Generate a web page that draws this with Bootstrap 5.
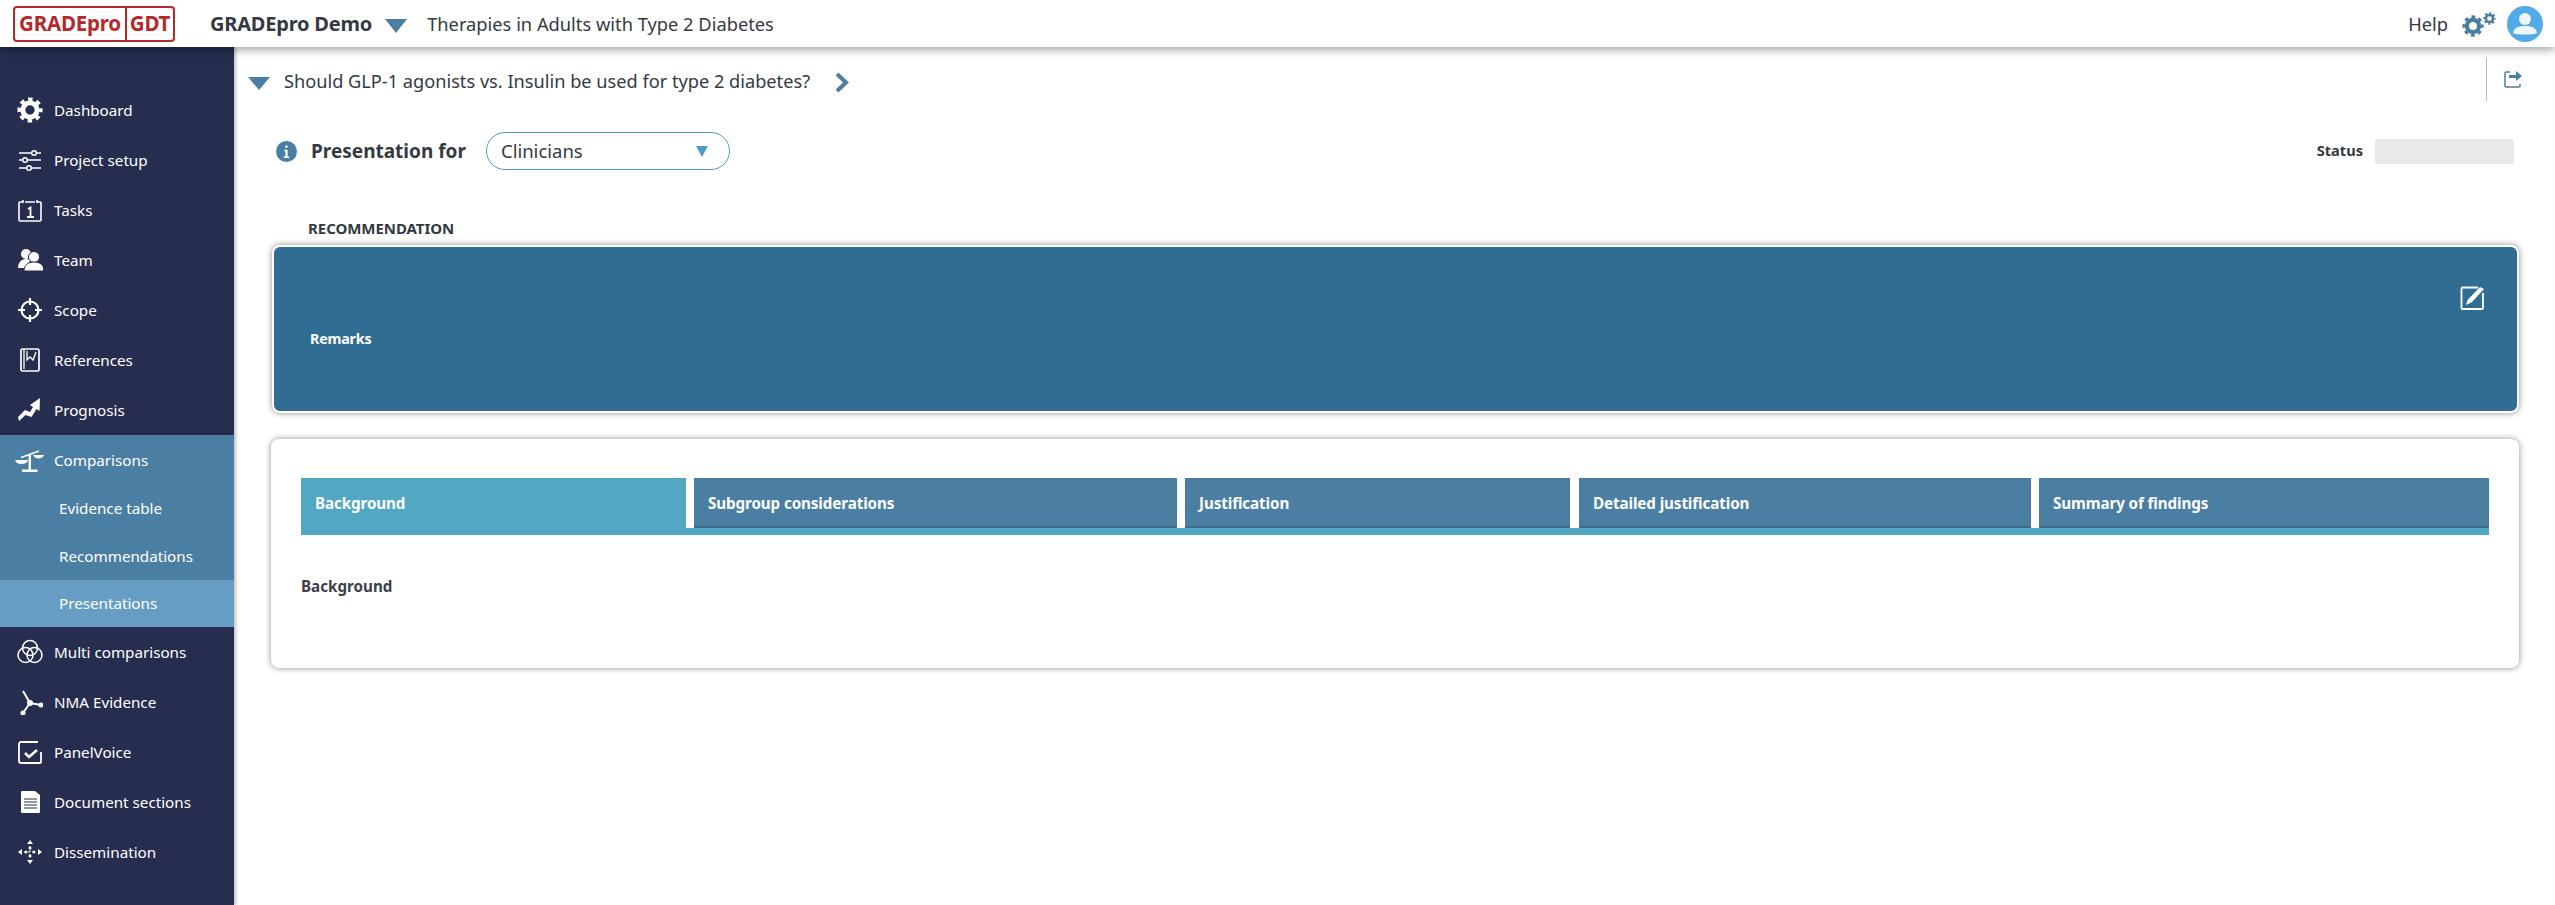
<!DOCTYPE html>
<html lang="en"><head><meta charset="utf-8"><title>GRADEpro</title>
<link href="https://cdn.jsdelivr.net/npm/bootstrap@5.3.0/dist/css/bootstrap.min.css" rel="stylesheet">
<style>
html,body{height:905px;overflow:hidden}
body{font-family:"Noto Sans","Open Sans",sans-serif;color:#333a42;background:#fff}
.gp-top{height:47px;padding:0;background:#fff;position:relative;z-index:3;box-shadow:0 3px 8px rgba(0,0,0,.35);flex-wrap:nowrap;justify-content:flex-start}
.gp-logo{margin-left:13px;width:162px;height:36px;border:2px solid #b5282b;border-radius:4px;color:#b5282b;font-weight:700;font-size:20.5px;line-height:31px;letter-spacing:-.2px}
.gp-logo span{display:block;text-align:center}
.gp-logo .gp-l1{width:112px;border-right:2px solid #b5282b}
.gp-logo .gp-l2{flex:1}
.gp-org{margin-left:35px;font-size:20px;font-weight:700;letter-spacing:-.2px;line-height:47px;color:#333a42}
.gp-tri{display:inline-block;width:0;height:0;border-left:11px solid transparent;border-right:11px solid transparent;border-top:14px solid #4a7fa3}
.gp-tri-org{margin-left:13px;margin-top:4px}
.gp-proj{margin-left:20px;font-size:18.3px;line-height:47px}
.gp-help{font-size:18.3px;margin-right:14px}
.gp-side{width:234px;flex:none;background:#272d4f;padding-top:38px;color:#fff;box-shadow:2px 0 3px rgba(0,0,0,.25);position:relative;z-index:2}
.gp-it{height:50px;display:flex;align-items:center;padding-left:17px;color:#fff;font-size:15.2px;text-decoration:none}
.gp-it svg{width:26px;height:26px;margin-right:11px;flex:none}
.gp-it svg.gp-scale{width:29px;height:23px;margin-left:-2px;margin-right:10px}
.gp-group{background:#4a7fa3}
.gp-sub{height:47px;display:flex;align-items:center;padding-left:59px;color:#fff;font-size:15.2px;text-decoration:none}
.gp-sub-tall{height:48px}
.gp-sub.gp-on{background:#659dc4}
.gp-main{flex:1;min-width:0}
.gp-q{height:54px;padding:21px 0 0 14px;position:relative;line-height:27px}
.gp-q .gp-tri{border-top-width:13px;margin-top:9px}
.gp-qt{margin-left:14px;font-size:18.2px}
.gp-chev{margin-left:24px;margin-top:4px}
.gp-share{width:69px;height:44px;border-left:1px solid #bbb;position:absolute;right:0;top:10px;display:flex;align-items:center;padding-left:17px}
.gp-pres{height:38px;margin-top:31px;padding-left:42px;padding-right:41px}
.gp-pt{margin-left:14px;font-size:19px;font-weight:700}
.gp-sel{margin-left:20px;width:244px;height:38px;border:1px solid #4d9bc9;border-radius:19px;padding:0 21px 0 14px;font-size:18.5px}
.gp-sel i{display:block;width:0;height:0;border-left:6px solid transparent;border-right:6px solid transparent;border-top:11px solid #4d9bc9}
.gp-st{font-size:14.6px;font-weight:700;margin-right:12px}
.gp-stb{width:139px;height:25px;background:#e9e9e9;border-radius:2px}
.gp-rt{margin:47px 0 6px 74px;font-size:15px;font-weight:700;letter-spacing:-.05px;line-height:22px}
.gp-rec{margin:0 36px 0 38px;height:168px;background:#316d93;border:2px solid #fff;border-radius:8px;box-shadow:0 0 6px rgba(0,0,0,.45);color:#fff;position:relative;padding:0 36px;display:flex;align-items:center}
.gp-rec b{font-size:14.3px;letter-spacing:-.2px;margin-top:20px}
.gp-edit{position:absolute;right:31px;top:37px;width:26px;height:26px}
.gp-card{margin:26px 36px 0 37px;height:229px;border:0;border-radius:8px;box-shadow:0 0 6px rgba(0,0,0,.45);padding:39px 30px 0 30px}
.gp-tabs{border-bottom:7px solid #52a7c2;height:57px}
.gp-tab{height:50px;background:#4a7fa3;color:#fff;font-size:15.2px;font-weight:700;letter-spacing:-.1px;padding-left:14px;line-height:50px;box-shadow:inset 0 -3px 3px -2px rgba(0,0,0,.3);white-space:nowrap}
.gp-tab.gp-act{background:#52a7c2;box-shadow:none;height:57px}
.gp-h{margin-top:39px;font-size:15.2px;font-weight:700;line-height:24px;color:#3c4047}
</style></head><body>
<svg width="0" height="0" class="position-absolute"><defs>
<symbol id="gp-gear" viewBox="0 0 24 24"><circle cx="12" cy="12" r="6.6" fill="none" stroke="currentColor" stroke-width="4.6"/><circle cx="12" cy="12" r="9.8" fill="none" stroke="currentColor" stroke-width="3.6" stroke-dasharray="4 3.7" stroke-dashoffset="2"/></symbol>
</defs></svg>
<nav class="navbar gp-top d-flex align-items-center">
 <div class="gp-logo d-flex"><span class="gp-l1">GRADEpro</span><span class="gp-l2">GDT</span></div>
 <span class="gp-org">GRADEpro Demo</span><span class="gp-tri gp-tri-org"></span>
 <span class="gp-proj">Therapies in Adults with Type 2 Diabetes</span>
 <div class="ms-auto d-flex align-items-center">
  <span class="gp-help">Help</span>
  <svg width="36" height="28" viewBox="0 0 36 28" style="color:#4a7fa3;margin-right:9px"><use href="#gp-gear" x="0" y="5" width="22" height="22"/><use href="#gp-gear" x="21" y="2" width="13" height="13"/></svg>
  <svg width="36" height="36" viewBox="0 0 36 36" style="margin-right:12px"><circle cx="18" cy="18" r="18" fill="#52abe8"/><circle cx="18" cy="13" r="6" fill="#eef6fc"/><path d="M6 27c1-6 6-7 12-7s11 1 12 7c-3 2-21 2-24 0z" fill="#eef6fc"/></svg>
 </div>
</nav>
<div class="d-flex" style="height:858px">
<aside class="gp-side">
 <a class="gp-it"><svg style="color:#fff"><use href="#gp-gear"/></svg>Dashboard</a>
 <a class="gp-it"><svg viewBox="0 0 26 26" fill="none" stroke="#fff" stroke-width="1.5"><path d="M2 6h22M2 13h22M2 21h22"/><circle cx="17" cy="6" r="2.3" fill="#272d4f"/><circle cx="8" cy="13" r="2.3" fill="#272d4f"/><circle cx="12" cy="21" r="2.3" fill="#272d4f"/></svg>Project setup</a>
 <a class="gp-it"><svg viewBox="0 0 26 26" fill="none" stroke="#fff" stroke-width="1.6"><path d="M6 5H3a1 1 0 0 0-1 1v17a1 1 0 0 0 1 1h20a1 1 0 0 0 1-1V6a1 1 0 0 0-1-1h-3M8 5h10"/><path d="M6 3v3M20 3v3" /><path d="M11 12l2.5-1.5V20M10 20h7" stroke-width="1.8"/></svg>Tasks</a>
 <a class="gp-it"><svg viewBox="0 0 26 26" fill="#fff"><circle cx="9" cy="7" r="5"/><path d="M1 21c0-6 4-9 8-9s4 1 4 2l-5 7z"/><circle cx="17" cy="10" r="5.5" stroke="#272d4f" stroke-width="1"/><path d="M7 24c0-6 4-9 10-9s10 3 10 9z" stroke="#272d4f" stroke-width="1"/></svg>Team</a>
 <a class="gp-it"><svg viewBox="0 0 26 26" fill="none" stroke="#fff" stroke-width="2.2"><circle cx="13" cy="13" r="8.5"/><path d="M13 1v7M13 18v7M1 13h7M18 13h7"/></svg>Scope</a>
 <a class="gp-it"><svg viewBox="0 0 26 26" fill="none" stroke="#fff" stroke-width="1.7"><rect x="4" y="2" width="18" height="22" rx="1.5"/><path d="M7 2v20M10 4v9l3-3 3 3 3-8" stroke-width="1.3"/></svg>References</a>
 <a class="gp-it"><svg viewBox="0 0 26 26" fill="#fff"><path d="M2 24l-1-4 7-7 5 2 3-5-3-2 10-7-.5 13-3-2-5 8-6-2z"/></svg>Prognosis</a>
 <div class="gp-group">
  <a class="gp-it"><svg class="gp-scale" viewBox="0 0 29 23" fill="#fff"><path d="M6 8.5L24 2" stroke="#fff" stroke-width="1.8"/><path d="M13.5 6H16v15h-2.500z"/><path d="M7 20.5h15.5V23H7z"/><path d="M0 11h13c-1 3-3.500 4-6.500 4S1 14 0 11z"/><path d="M18 6h11c-1 2.500-3 3.500-5.500 3.500S19 8.500 18 6z"/></svg>Comparisons</a>
  <a class="gp-sub">Evidence table</a>
  <a class="gp-sub gp-sub-tall">Recommendations</a>
  <a class="gp-sub gp-on">Presentations</a>
 </div>
 <a class="gp-it"><svg viewBox="0 0 26 26" fill="none" stroke="#fff" stroke-width="1.5"><circle cx="13" cy="9" r="7.5"/><circle cx="8.5" cy="16" r="7.5"/><circle cx="17.5" cy="16" r="7.5"/></svg>Multi comparisons</a>
 <a class="gp-it"><svg viewBox="0 0 26 26" fill="none" stroke="#fff" stroke-width="2"><path d="M6 2l7 12-7 10M13 14l11 2"/><circle cx="13" cy="14" r="2" fill="#fff"/><circle cx="6" cy="24" r="1.5" fill="#fff"/><circle cx="24" cy="16" r="1.5" fill="#fff"/></svg>NMA Evidence</a>
 <a class="gp-it"><svg viewBox="0 0 26 26" fill="none" stroke="#fff" stroke-width="1.8"><path d="M21 3H4a2 2 0 0 0-2 2v17a2 2 0 0 0 2 2h19a1 1 0 0 0 1-1V13"/><path d="M8 14l4 4 8-7" stroke-width="2.6"/></svg>PanelVoice</a>
 <a class="gp-it"><svg viewBox="0 0 26 26"><path d="M5 2h13l5 4v17a1 1 0 0 1-1 1H5a1 1 0 0 1-1-1V3a1 1 0 0 1 1-1z" fill="#fff"/><path d="M7 10h13M7 13h13M7 16h13M7 19h13" stroke="#272d4f" stroke-width="1.2"/></svg>Document sections</a>
 <a class="gp-it"><svg viewBox="0 0 26 26" fill="#fff"><path d="M13 1l3 4h-6zM13 25l-3-4h6zM1 13l4-3v6zM25 13l-4 3v-6z"/><path d="M13 7v12M7 13h12" stroke="#fff" stroke-width="1" stroke-dasharray="2 2"/><circle cx="13" cy="9" r="1.5"/><circle cx="13" cy="17" r="1.5"/><circle cx="9" cy="13" r="1.5"/><circle cx="17" cy="13" r="1.5"/></svg>Dissemination</a>
</aside>
<main class="gp-main">
 <div class="gp-q d-flex align-items-start">
  <span class="gp-tri"></span><span class="gp-qt">Should GLP-1 agonists vs. Insulin be used for type 2 diabetes?</span>
  <svg class="gp-chev" width="16" height="21" viewBox="0 0 16 21" fill="none" stroke="#4a7fa3" stroke-width="4"><path d="M3 2l9 8.5-9 8.5"/></svg>
  <div class="gp-share"><svg width="18" height="20" viewBox="0 0 18 20" fill="none" stroke="#4a7fa3" stroke-width="1.5"><path d="M6 3H2a1 1 0 0 0-1 1v13a1 1 0 0 0 1 1h13a1 1 0 0 0 1-1v-2"/><path d="M5 6h7V2l6 5-6 5V9H5z" fill="#4a7fa3" stroke="none"/></svg></div>
 </div>
 <div class="gp-pres d-flex align-items-center">
  <svg width="21" height="21" viewBox="0 0 19 19"><circle cx="9.5" cy="9.5" r="9.5" fill="#4a7fa3"/><path d="M7.5 8h3v6H12v1.300H7V14h1.500V9.300h-1zM8.500 4h2v2h-2z" fill="#fff"/></svg>
  <span class="gp-pt">Presentation for</span>
  <div class="gp-sel d-flex align-items-center justify-content-between"><span>Clinicians</span><i></i></div>
  <span class="gp-st ms-auto">Status</span><div class="gp-stb"></div>
 </div>
 <div class="gp-rt">RECOMMENDATION</div>
 <div class="gp-rec"><b>Remarks</b>
  <svg class="gp-edit" viewBox="0 0 26 26" fill="none" stroke="#fff" stroke-width="1.8"><path d="M18 3.5H2.500a1 1 0 0 0-1 1V24a1 1 0 0 0 1 1H22a1 1 0 0 0 1-1V9"/><path d="M6 21l1.500-5L20 3l4 2-12 13z" fill="#fff" stroke="none"/></svg>
 </div>
 <div class="card gp-card">
  <div class="gp-tabs d-flex align-items-start">
   <div class="gp-tab gp-act" style="width:385px;margin-right:8px">Background</div>
   <div class="gp-tab" style="width:483px;margin-right:8px">Subgroup considerations</div>
   <div class="gp-tab" style="width:385px;margin-right:9px">Justification</div>
   <div class="gp-tab" style="width:452px;margin-right:8px">Detailed justification</div>
   <div class="gp-tab flex-grow-1">Summary of findings</div>
  </div>
  <div class="gp-h">Background</div>
 </div>
</main>
</div>
</body></html>
